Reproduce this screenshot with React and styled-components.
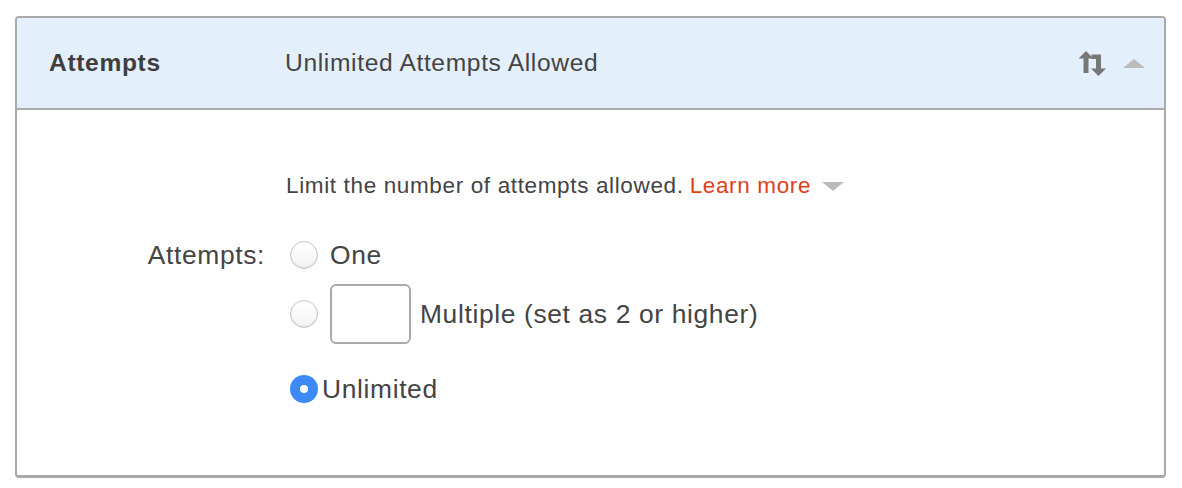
import React from 'react';
import styled, { createGlobalStyle } from 'styled-components';

const GlobalStyle = createGlobalStyle`
  body {
    margin: 0;
    background: #fff;
    font-family: "Liberation Sans", Arial, sans-serif;
    color: #444;
    letter-spacing: 0.04em;
  }
`;

const Page = styled.div`
  padding: 16px 16px 10px 15px;
`;

const Panel = styled.section`
  border: 2px solid #aaa;
  border-bottom-width: 3px;
  border-radius: 4px;
  overflow: hidden;
  background: #fff;
`;

const Header = styled.header`
  display: flex;
  align-items: center;
  height: 90px;
  padding: 0 19px 0 32px;
  background: #e3effb;
  border-bottom: 2px solid #aaa;
`;

const Title = styled.h2`
  margin: 0;
  width: 236px;
  font-size: 24.6px;
  font-weight: 700;
  color: #3e3e3e;
`;

const Summary = styled.span`
  flex: 1;
  font-size: 24.6px;
  color: #444;
`;

const HeaderTools = styled.div`
  display: flex;
  align-items: center;
  gap: 14px;
  color: #777;
`;

const Body = styled.div`
  padding: 64px 0 52px;
`;

const Intro = styled.p`
  margin: 0 0 39px 269px;
  font-size: 22.5px;
  line-height: 24px;
  color: #444;
  display: flex;
  align-items: center;
`;

const LearnMore = styled.a`
  color: #e0401a;
  text-decoration: none;
  margin-left: 6px;
  display: inline-flex;
  align-items: center;
  gap: 11px;
`;

const Caret = styled.span`
  width: 0;
  height: 0;
  border-left: 11px solid transparent;
  border-right: 11px solid transparent;
  border-${p => (p.$up ? 'bottom' : 'top')}: 9px solid #bbb;
`;

const Field = styled.div`
  display: grid;
  grid-template-columns: 248px 1fr;
  column-gap: 25px;
`;

const Label = styled.span`
  text-align: right;
  font-size: 26.4px;
  line-height: 36px;
  color: #444;
`;

const Options = styled.div`
  display: flex;
  flex-direction: column;
`;

const Option = styled.label`
  display: flex;
  align-items: center;
  font-size: 26.4px;
  color: #444;
  gap: ${p => p.$gap}px;
  height: ${p => p.$h}px;
`;

const Radio = styled.span`
  width: 28px;
  height: 28px;
  border-radius: 50%;
  box-sizing: border-box;
  flex-shrink: 0;
  display: flex;
  align-items: center;
  justify-content: center;
  border: ${p => (p.$checked ? 'none' : '1px solid #c4c4c4')};
  background: ${p => (p.$checked ? '#3d8af7' : 'linear-gradient(#fff, #f3f3f3)')};
  box-shadow: ${p => (p.$checked ? 'none' : 'inset 0 -1px 2px rgba(0,0,0,0.08)')};

  &::after {
    content: '';
    display: ${p => (p.$checked ? 'block' : 'none')};
    width: 8px;
    height: 8px;
    border-radius: 50%;
    background: #fff;
  }
`;

const NumberBox = styled.input`
  width: 81px;
  height: 60px;
  box-sizing: border-box;
  border: 2px solid #aaa;
  border-radius: 6px;
  font-size: 22px;
  padding: 0 8px;
  outline: none;
`;

const OptionText = styled.span`
  margin-left: ${p => p.$shift || 0}px;
`;

function SortIcon() {
  return (
    <svg width="31" height="25" viewBox="0 0 31 25" fill="#777">
      <path d="M8 0 L15.5 7.5 H10.5 V22 H5.5 V7.5 H0.5 Z" />
      <path d="M13.5 3.5 H23 V17.5 H28 L20.5 25 L13 17.5 H18 V8 H13.5 Z" />
    </svg>
  );
}

export default function App() {
  return (
    <Page>
      <GlobalStyle />
      <Panel>
        <Header>
          <Title>Attempts</Title>
          <Summary>Unlimited Attempts Allowed</Summary>
          <HeaderTools>
            <SortIcon />
            <Caret $up />
          </HeaderTools>
        </Header>
        <Body>
          <Intro>
            Limit the number of attempts allowed.
            <LearnMore href="#">
              Learn more
              <Caret />
            </LearnMore>
          </Intro>
          <Field>
            <Label>Attempts:</Label>
            <Options>
              <Option $gap={12} $h={36}>
                <Radio />
                One
              </Option>
              <Option $gap={12} $h={82}>
                <Radio />
                <NumberBox type="text" />
                <OptionText $shift={-3}>Multiple (set as 2 or higher)</OptionText>
              </Option>
              <Option $gap={4} $h={68}>
                <Radio $checked />
                Unlimited
              </Option>
            </Options>
          </Field>
        </Body>
      </Panel>
    </Page>
  );
}
